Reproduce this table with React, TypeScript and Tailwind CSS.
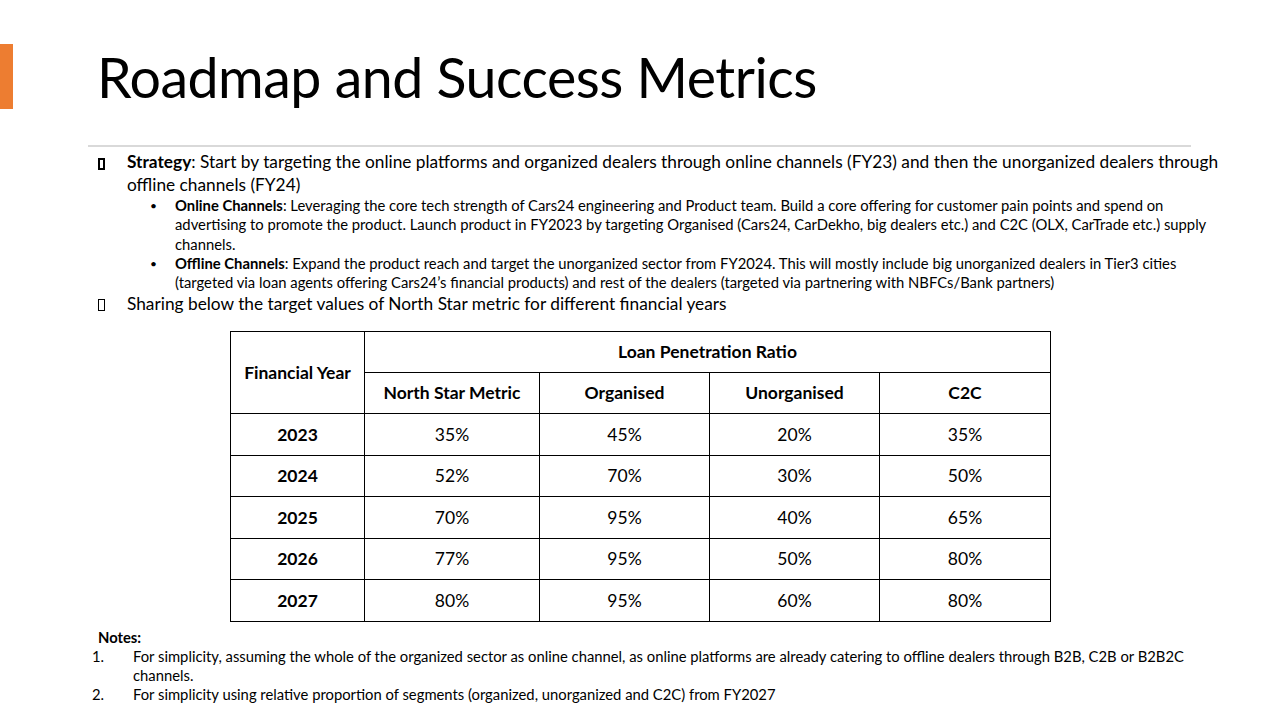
import React from 'react';

const rows = [
  ['2023', '35%', '45%', '20%', '35%'],
  ['2024', '52%', '70%', '30%', '50%'],
  ['2025', '70%', '95%', '40%', '65%'],
  ['2026', '77%', '95%', '50%', '80%'],
  ['2027', '80%', '95%', '60%', '80%'],
];

function Box({ bold = false }: { bold?: boolean }) {
  return (
    <span
      className={`inline-block w-[7px] h-[12px] border-black ${bold ? 'border-2' : 'border'}`}
    />
  );
}

export default function App() {
  return (
    <div
      className="w-[1280px] h-[720px] bg-white relative overflow-hidden text-black"
      style={{ fontFamily: 'Lato, "Open Sans", sans-serif' }}
    >
      <div className="flex items-start pt-[44px]">
        <div className="w-[13px] h-[65px] bg-[#ED7D31]" />
        <h1 className="ml-[84px] mt-[3px] text-[55.5px] leading-[60px] tracking-[-0.5px] font-normal">
          Roadmap and Success Metrics
        </h1>
      </div>
      <div className="ml-[88px] mt-[36px] w-[1103px] h-[2px] bg-[#d9d9d9]" />

      <div className="pl-[98px] mt-[3px]">
        <div className="flex">
          <div className="w-[29px] pt-[2px]">
            <Box bold />
          </div>
          <p className="text-[17.3px] leading-[23px] whitespace-nowrap">
            <b>Strategy</b>: Start by targeting the online platforms and organized dealers through online channels (FY23) and then the unorganized dealers through
            <br />
            offline channels (FY24)
          </p>
        </div>

        <ul className="ml-[52px] text-[14.8px] leading-[19.3px] whitespace-nowrap">
          <li className="flex">
            <span className="w-[25px] text-[12px]">•</span>
            <span>
              <b>Online Channels</b>: Leveraging the core tech strength of Cars24 engineering and Product team. Build a core offering for customer pain points and spend on
              <br />
              advertising to promote the product. Launch product in FY2023 by targeting Organised (Cars24, CarDekho, big dealers etc.) and C2C (OLX, CarTrade etc.) supply
              <br />
              channels.
            </span>
          </li>
          <li className="flex">
            <span className="w-[25px] text-[12px]">•</span>
            <span>
              <b>Offline Channels</b>: Expand the product reach and target the unorganized sector from FY2024. This will mostly include big unorganized dealers in Tier3 cities
              <br />
              (targeted via loan agents offering Cars24’s financial products) and rest of the dealers (targeted via partnering with NBFCs/Bank partners)
            </span>
          </li>
        </ul>

        <div className="flex">
          <div className="w-[29px] pt-[1px]">
            <Box />
          </div>
          <p className="text-[17.3px] leading-[23px] whitespace-nowrap">
            Sharing below the target values of North Star metric for different financial years
          </p>
        </div>
      </div>

      <table className="ml-[230px] mt-[14px] border-collapse text-[17.5px]">
        <colgroup>
          <col className="w-[134px]" />
          <col className="w-[175px]" />
          <col className="w-[170px]" />
          <col className="w-[170px]" />
          <col className="w-[171px]" />
        </colgroup>
        <thead>
          <tr className="h-[41px]">
            <th rowSpan={2} className="border border-black font-bold text-center">
              Financial Year
            </th>
            <th colSpan={4} className="border border-black font-bold text-center">
              Loan Penetration Ratio
            </th>
          </tr>
          <tr className="h-[41px]">
            {['North Star Metric', 'Organised', 'Unorganised', 'C2C'].map((h) => (
              <th key={h} className="border border-black font-bold text-center">
                {h}
              </th>
            ))}
          </tr>
        </thead>
        <tbody>
          {rows.map((r) => (
            <tr key={r[0]} className="h-[41.5px]">
              {r.map((c, i) => (
                <td
                  key={i}
                  className={`border border-black text-center ${i === 0 ? 'font-bold' : ''}`}
                >
                  {c}
                </td>
              ))}
            </tr>
          ))}
        </tbody>
      </table>

      <div className="mt-[6px] text-[14.8px] leading-[19px]">
        <p className="ml-[98px] font-bold">Notes:</p>
        <ol className="ml-[92px] whitespace-nowrap">
          <li className="flex">
            <span className="w-[41px]">1.</span>
            <span>
              For simplicity, assuming the whole of the organized sector as online channel, as online platforms are already catering to offline dealers through B2B, C2B or B2B2C
              <br />
              channels.
            </span>
          </li>
          <li className="flex">
            <span className="w-[41px]">2.</span>
            <span>For simplicity using relative proportion of segments (organized, unorganized and C2C) from FY2027</span>
          </li>
        </ol>
      </div>
    </div>
  );
}
